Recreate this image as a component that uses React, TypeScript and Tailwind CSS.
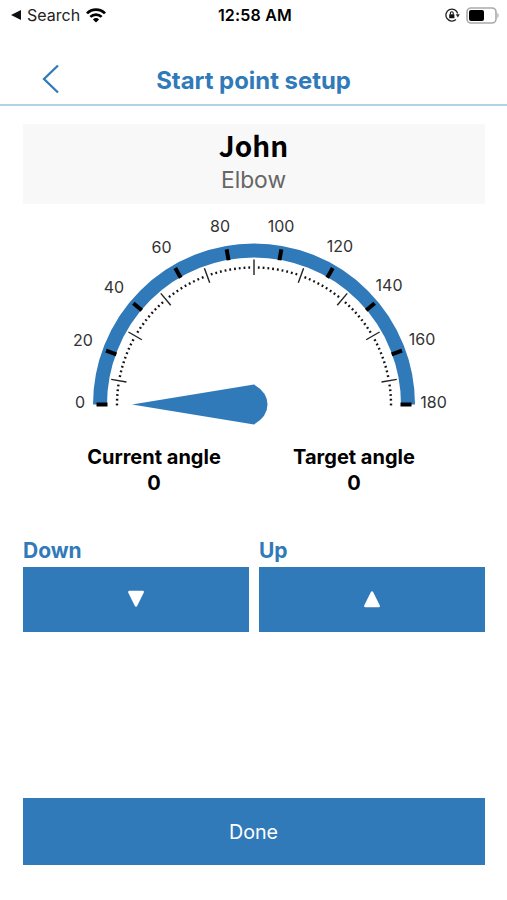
const BLUE = "#307aba";

const CX = 254;
const CY = 192.5;

const LABELS = [
  { text: "0", x: 80, y: 190 },
  { text: "20", x: 83, y: 128.5 },
  { text: "40", x: 114, y: 75 },
  { text: "60", x: 161.5, y: 35 },
  { text: "80", x: 220, y: 14 },
  { text: "100", x: 281, y: 14 },
  { text: "120", x: 340, y: 34 },
  { text: "140", x: 389, y: 73 },
  { text: "160", x: 422, y: 127 },
  { text: "180", x: 433.5, y: 190 },
];

const MAJOR = [0, 20, 40, 60, 80, 100, 120, 140, 160, 180];
const MINOR = [10, 30, 50, 70, 90, 110, 130, 150, 170];

// one dot every 2 degrees, skipping the minor ticks
const DOTS = Array.from({ length: 91 }, (_, i) => i * 2).filter((deg) => !MINOR.includes(deg));

function StatusBar() {
  return (
    <div className="flex h-[30px] items-center justify-between pl-[11px] pr-[8px] text-[#222]">
      <div className="flex w-[180px] items-center">
        <svg width="10" height="10" viewBox="0 0 10 10">
          <path d="M0 5 10 0v10z" fill="#111" />
        </svg>
        <span className="ml-[6px] text-[16px] leading-[30px]">Search</span>
        <svg className="ml-[6px]" width="20" height="15" viewBox="0 0 20 15">
          <g fill="none" stroke="#000" strokeWidth="2.7">
            <path d="M1 5.4a12.7 12.7 0 0 1 18 0" />
            <path d="M4.4 8.9a7.9 7.9 0 0 1 11.2 0" />
          </g>
          <path d="M10 14.6 6.9 11.4a4.4 4.4 0 0 1 6.2 0z" fill="#000" />
        </svg>
      </div>
      <span className="text-[16px] font-semibold leading-[30px] tracking-[0.2px] text-black">
        12:58 AM
      </span>
      <div className="flex w-[180px] items-center justify-end gap-[6px]">
        <svg width="15" height="14" viewBox="0 0 15 14">
          <path d="M12.7 5.5A6 6 0 1 0 11 11.5" fill="none" stroke="#222" strokeWidth="1.3" />
          <path d="M10.8 6.2h4l-2 3.2z" fill="#222" />
          <rect x="4.2" y="6.2" width="5.2" height="4" rx="0.5" fill="#111" />
          <path d="M5.4 6.5V5.1a1.4 1.4 0 0 1 2.8 0v1.4" fill="none" stroke="#111" strokeWidth="1.1" />
        </svg>
        <svg width="33" height="17" viewBox="0 0 33 17">
          <rect x="1" y="1" width="29" height="15" rx="4" fill="none" stroke="#aaa" strokeWidth="1.6" />
          <rect x="3" y="3" width="15" height="11" rx="2" fill="#000" />
          <path d="M31.4 6v5c1.6-.6 1.6-4.4 0-5z" fill="#aaa" />
        </svg>
      </div>
    </div>
  );
}

function Gauge() {
  return (
    <svg className="block" width="507" height="228" viewBox="0 0 507 228">
      <path
        d={`M${CX - 154} ${CY}A154 154 0 0 1 ${CX + 154} ${CY}`}
        fill="none"
        stroke={BLUE}
        strokeWidth="14"
      />
      {DOTS.map((deg) => (
        <rect
          key={deg}
          x={CX - 138.2}
          y={CY - 0.9}
          width="2.4"
          height="1.8"
          fill="#111"
          transform={`rotate(${deg} ${CX} ${CY})`}
        />
      ))}
      {MINOR.map((deg) => (
        <rect
          key={deg}
          x={CX - 145}
          y={CY - 0.7}
          width="15.5"
          height="1.4"
          fill="#222"
          transform={`rotate(${deg} ${CX} ${CY})`}
        />
      ))}
      {MAJOR.map((deg) => (
        <rect
          key={deg}
          x={CX - 157.5}
          y={CY - 2}
          width="11"
          height="4"
          fill="#000"
          transform={`rotate(${deg} ${CX} ${CY})`}
        />
      ))}
      <path d="M132 192.5 254 172.5Q267.5 180.5 267.5 192.5T254 212.5z" fill={BLUE} />
      {LABELS.map((l) => (
        <text key={l.text} x={l.x} y={l.y + 5.5} fontSize="16" textAnchor="middle" fill="#333">
          {l.text}
        </text>
      ))}
    </svg>
  );
}

function Reading({ label, value }: { label: string; value: number }) {
  return (
    <div className="w-[200px] text-center text-[20px] font-bold leading-[26px] text-black">
      <p>{label}</p>
      <p>{value}</p>
    </div>
  );
}

function StepButton({ label, path }: { label: string; path: string }) {
  return (
    <div className="flex-1">
      <p className="pl-[0.5px] text-[21px] font-bold leading-[25px] text-[#307aba]">{label}</p>
      <button
        className="mt-[4px] flex h-[64.5px] w-full items-center justify-center bg-[#307aba]"
        aria-label={label}
      >
        <svg width="18" height="18" viewBox="0 0 18 18">
          <path d={path} fill="#fff" stroke="#fff" strokeWidth="2.5" strokeLinejoin="round" />
        </svg>
      </button>
    </div>
  );
}

export default function App() {
  return (
    <div className="flex h-[900px] w-[507px] flex-col bg-white font-['Inter',sans-serif]">
      <StatusBar />

      <header className="grid h-[76px] grid-cols-[80px_1fr_80px] items-center border-b-2 border-[#b5d2e5] pt-[24px]">
        <button className="flex h-[50px] items-center pl-[41px]" aria-label="Back">
          <svg width="19" height="30" viewBox="0 0 19 30">
            <path d="M17 1.5 3 15l14 13.5" fill="none" stroke={BLUE} strokeWidth="2.3" />
          </svg>
        </button>
        <h1 className="pt-[3px] text-center text-[23.9px] font-bold leading-[47px] text-[#307aba]">
          Start point setup
        </h1>
      </header>

      <section className="mx-[22.5px] mt-[18px] h-[80px] bg-[#f8f8f8] pt-[5px] text-center">
        <h2 className="font-['Noto_Sans_CJK_JP',sans-serif] text-[28px] font-bold leading-[32px] text-black">
          John
        </h2>
        <p className="pt-[5px] text-[22.8px] leading-[28px] text-[#666]">Elbow</p>
      </section>

      <div className="mt-[8px]">
        <Gauge />
      </div>

      <div className="mt-[4px] flex pl-[54px]">
        <Reading label="Current angle" value={0} />
        <Reading label="Target angle" value={0} />
      </div>

      <div className="mx-[22.5px] mt-[42px] flex gap-[10px]">
        <StepButton label="Down" path="M2.3 2h13.4L9 15.5z" />
        <StepButton label="Up" path="M2.3 16h13.4L9 2.5z" />
      </div>

      <button className="mx-[22.5px] mt-[166px] h-[67px] bg-[#307aba] pt-[3px] text-[19.7px] text-white">
        Done
      </button>
    </div>
  );
}
